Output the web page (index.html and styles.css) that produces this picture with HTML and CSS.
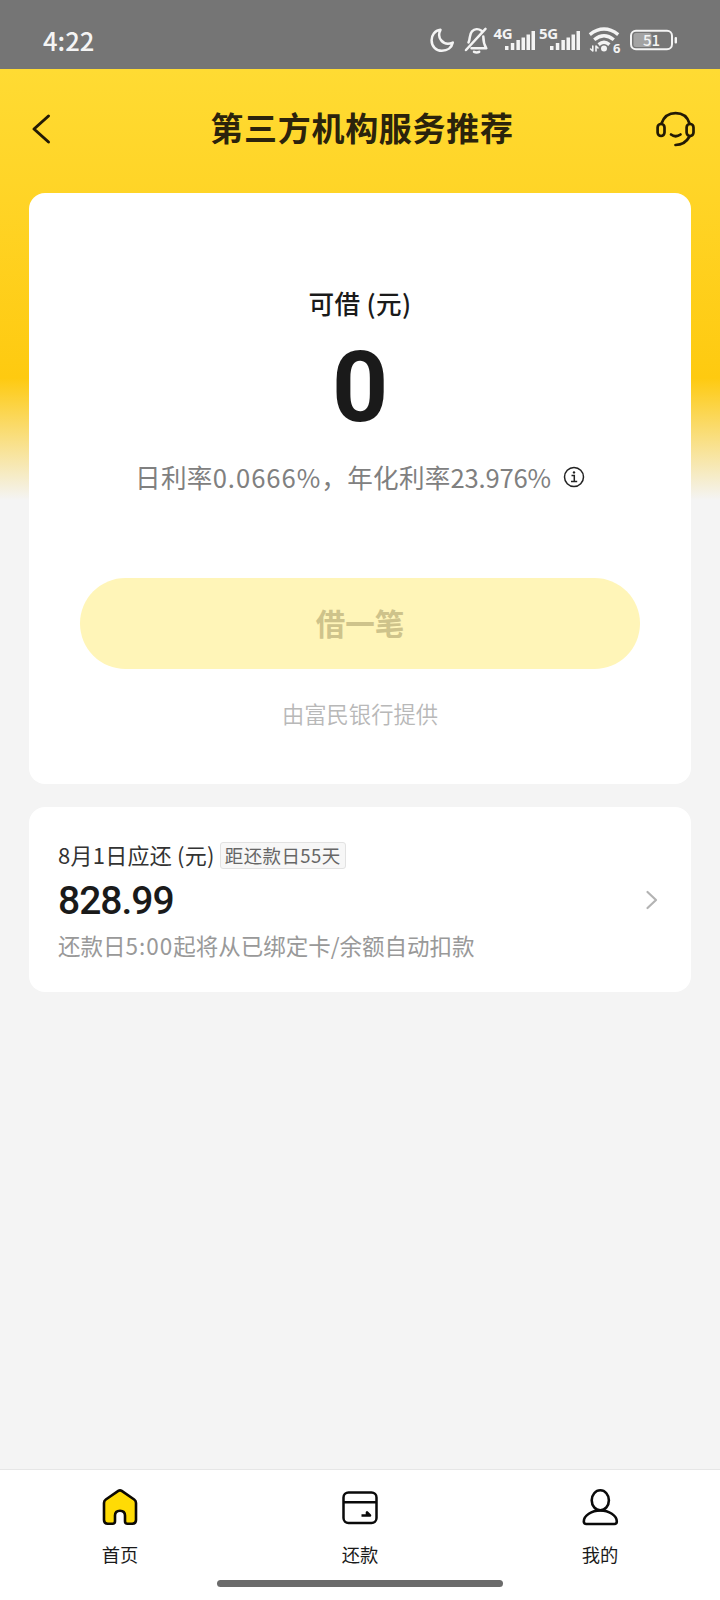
FILE: index.html
```html
<!DOCTYPE html>
<html lang="zh-CN">
<head>
<meta charset="utf-8">
<title>第三方机构服务推荐</title>
<link rel="stylesheet" href="styles.css">
</head>
<body>
<div class="screen">
  <div class="status">
    <span class="time">4:22</span>
    <svg class="status-icons" width="270" height="60" viewBox="420 10 270 60">
      <g fill="none" stroke="#f4f4f4" stroke-width="2.5" stroke-linecap="round" stroke-linejoin="round">
        <path d="M440.5 29.8C434.5 30.6 431.600 35.4 431.600 40.2C431.600 46.4 436 50.8 441.8 50.8C447.4 50.8 451.8 47.6 452.8 42.6C448 44.6 443.600 43.400 441.2 40.400C438.800 37.400 438.600 33.200 440.500 29.800Z"/>
        <path d="M485.500 28.800L466 50M481.500 30.800C478.500 28.600 474.500 28.800 472 31.300C469 34.500 470.500 38.500 468.500 42.500M483.300 36.500C483.300 42 484 44.500 486.300 48.300H471.500"/>
        <path d="M474 51.800Q476.600 53 479.200 51.800"/>
        <path d="M589.800 34.600Q604 23.600 618.200 34.600M594.200 39.700Q604 31.800 613.800 39.700M598.600 44.600Q604 40 609.400 44.600" stroke-width="3.400" stroke-linecap="butt"/>
        <path d="M592.800 46V51L590.600 49M596 51V46L598 48" stroke-width="1.600"/>
        <rect x="631" y="30.700" width="41" height="18.600" rx="5" stroke-width="2"/>
      </g>
      <rect x="633.500" y="33" width="18" height="14" rx="2.500" fill="#a3a3a3"/>
      <g fill="#f4f4f4">
        <circle cx="604" cy="48.400" r="3"/>
        <rect x="674.600" y="37" width="2.400" height="6.500" rx="1"/>
        <path id="bars" d="M505 46h3.500v4h-3.500zM510.800 43h3.500v7h-3.500zM516.400 40h3.500v10h-3.500zM521.500 37.500h3.500v12.500h-3.500zM526.500 34.500h3.500v15.500h-3.500zM531.500 31h3.500v19h-3.500z"/>
        <use href="#bars" x="45"/>
        <text class="tiny" x="493.500" y="38.500" font-size="15" textLength="19">4G</text>
        <text class="tiny" x="539" y="38.500" font-size="15" textLength="19">5G</text>
        <text class="tiny" x="613" y="53" font-size="13">6</text>
        <text class="level" x="651.500" y="45.700" font-size="15" text-anchor="middle">51</text>
      </g>
    </svg>
  </div>

  <header class="header">
    <svg width="24" height="36" viewBox="30 111 24 36" fill="none" stroke="#231a05" stroke-width="3" stroke-linecap="round" stroke-linejoin="round"><path d="M48.500 116L34 129L48.500 142"/></svg>
    <h1>第三方机构服务推荐</h1>
    <svg width="44" height="40" viewBox="654 109 44 40" fill="none" stroke="#231a05" stroke-width="2.700" stroke-linecap="round"><rect x="657.600" y="124" width="6.900" height="12" rx="3.450"/><rect x="686.600" y="124" width="6.900" height="12" rx="3.450"/><path d="M661.500 123.500C664 116.500 669.500 113.200 675.600 113.200S687.300 116.500 689.500 123.500M671 134.500Q675.500 138 680.500 134.500M689.500 136.500Q685 144.800 675.500 145"/></svg>
  </header>

  <main>
    <section class="card loan">
      <div class="label">可借 (元)</div>
      <div class="amount">0</div>
      <div class="rate"><span>日利率<span class="daily">0.0666%</span>，年化利率<span class="yearly">23.976%</span></span>
        <svg width="22" height="22" viewBox="0 0 22 22" fill="none" stroke="#222" stroke-width="1.500"><circle cx="11" cy="11" r="9.500"/><path d="M8.500 9.500H11.300V15.500M8 15.600H14.200"/><circle cx="11" cy="6.400" r="1.200" fill="#222" stroke="none"/></svg>
      </div>
      <button class="borrow" disabled>借一笔</button>
      <div class="provider">由富民银行提供</div>
    </section>
    <section class="card due">
      <div>
        <div class="due-head"><span class="due-title">8月1日应还 (元)</span><span class="tag">距还款日55天</span></div>
        <div class="due-amount">828.99</div>
        <div class="due-note">还款日<span class="due-time">5:00</span>起将从已绑定卡/余额自动扣款</div>
      </div>
      <svg width="14" height="20" viewBox="0 0 14 20" fill="none" stroke="#b3b3b3" stroke-width="2.200" stroke-linecap="round" stroke-linejoin="round"><path d="M2.500 2L11 10L2.500 18"/></svg>
    </section>
  </main>

  <nav class="tabs">
    <a class="tab"><svg width="40" height="40" viewBox="0 0 40 40" fill="none" stroke="#0d0a05" stroke-width="2.600" stroke-linejoin="round"><path fill="#ffdb05" d="M18.300 2.900Q20 1.700 21.700 2.900L34.200 11.500Q36 12.800 36 15V32Q36 35.700 32.300 35.700H27.500Q25 35.700 25 33.200V27.500Q25 22.700 20 22.700T15 27.500V33.200Q15 35.700 12.500 35.700H7.700Q4 35.700 4 32V15Q4 12.800 5.800 11.500Z"/></svg><span>首页</span></a>
    <a class="tab"><svg width="40" height="40" viewBox="0 0 40 40" fill="none" stroke="#0a0a0a" stroke-width="2.500" stroke-linejoin="round"><rect x="3.500" y="4.500" width="33" height="30.500" rx="5"/><path d="M3.400 14.200H36.600"/><path d="M21.500 27.500H30L27 24.500V27" stroke-width="2.600"/></svg><span>还款</span></a>
    <a class="tab"><svg width="40" height="40" viewBox="0 0 40 40" fill="none" stroke="#0a0a0a" stroke-width="2.600" stroke-linejoin="round"><ellipse cx="20.300" cy="12.300" rx="8.600" ry="10"/><path d="M20.300 22.500C29 22.500 36.800 27.500 36.800 33.500Q36.800 36 34.300 36H6.300Q3.800 36 3.800 33.500C3.800 27.500 11.600 22.500 20.300 22.500Z"/></svg><span>我的</span></a>
    <div class="home-bar"></div>
  </nav>
</div>
</body>
</html>
```

FILE: styles.css
```css
* { box-sizing: border-box; }
body { margin: 0; font-family: "Noto Sans CJK SC", sans-serif; color: #1a1a1a; }
.screen {
  width: 720px; height: 1600px; display: flex; flex-direction: column; overflow: hidden;
  background: linear-gradient(180deg, #ffdb33 69px, #ffd426 200px, #feca10 378px, #f4f4f4 500px);
}
.status { height: 69px; background: #757575; display: flex; justify-content: space-between; padding: 10px 30px 0 43px; flex: none; }
.time { font-size: 25.600px; line-height: 59px; font-weight: 500; color: #f4f4f4; }
.tiny { font-family: "Open Sans", sans-serif; font-weight: 700; }
.level { font-family: "Noto Sans CJK SC", sans-serif; font-weight: 500; }
.header { height: 124px; flex: none; display: flex; align-items: center; justify-content: space-between; padding: 0 22px 4px 30px; }
.header h1 { margin: -4px -8px 0 8px; font-size: 33px; letter-spacing: .7px; line-height: 48px; font-weight: 700; color: #2b230c; }
main { flex: 1; padding: 0 29px; display: flex; flex-direction: column; gap: 23px; }
.card { background: #fff; border-radius: 16px; }
.loan { height: 591px; display: flex; flex-direction: column; align-items: center; padding-top: 90px; }
.label { font-size: 25.600px; line-height: 40px; font-weight: 500; letter-spacing: .4px; }
.amount { font-family: Roboto, sans-serif; font-weight: 700; font-size: 98px; line-height: 100px; margin-top: 15px; }
.rate { display: flex; align-items: center; gap: 12px; margin-top: 19px; line-height: 40px; font-size: 25.600px; letter-spacing: .25px; color: #808080; white-space: nowrap; }
.daily { letter-spacing: 1px; }
.yearly { letter-spacing: -.2px; }
.borrow { width: 560px; height: 91px; margin-top: 81px; border: 0; padding: 0 0 3px; border-radius: 46px; background: #fff5b8; color: #cec38b; font: 700 29.500px/88px "Noto Sans CJK SC", sans-serif; }
.provider { margin-top: 28px; font-size: 22.300px; line-height: 32px; color: #b8b8b8; font-weight: 350; }
.due { height: 185px; padding: 33px 32px 0 29px; display: flex; justify-content: space-between; }
.due > svg { margin-top: 50px; }
.due-head { display: flex; align-items: center; gap: 5px; height: 30px; }
.due-title { font-size: 22px; color: #333; white-space: nowrap; letter-spacing: .25px; margin-top: -2px; }
.tag { font-size: 18.500px; line-height: 25px; color: #666; border: 1px solid #e2e2e2; background: #f7f7f7; border-radius: 3px; padding: 0 4px; white-space: nowrap; letter-spacing: .4px; }
.due-amount { font-family: Roboto, sans-serif; font-weight: 500; font-size: 39px; line-height: 46px; margin-top: 8px; letter-spacing: -1px; }
.due-note { font-size: 22.500px; line-height: 32px; margin-top: 5px; color: #999; white-space: nowrap; }
.due-time { letter-spacing: 1px; }
.tabs { position: relative; height: 131px; flex: none; background: #fff; border-top: 1px solid #e6e6e6; display: grid; grid-template-columns: repeat(3, 1fr); }
.tab { display: flex; flex-direction: column; align-items: center; padding-top: 18px; font-size: 18.300px; line-height: 28px; gap: 13px; height: 106px; }
.tab span { margin-top: -1px; }
.home-bar { position: absolute; left: 217px; bottom: 13px; width: 286px; height: 7px; border-radius: 4px; background: #6b6b6b; }
```
